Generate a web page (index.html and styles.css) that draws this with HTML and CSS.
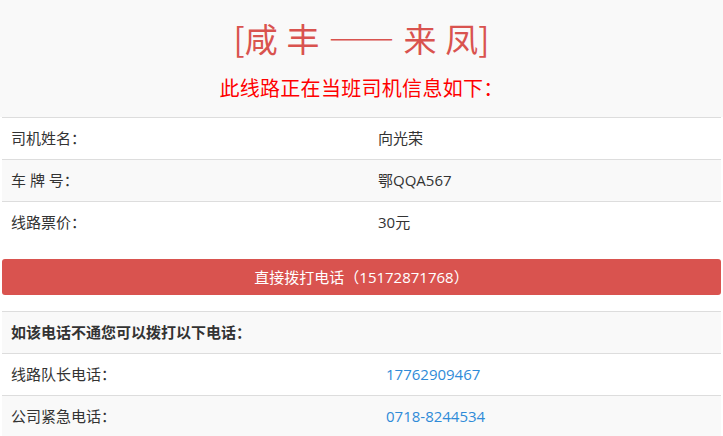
FILE: index.html
```html
<!DOCTYPE html>
<html lang="zh-CN">
<head>
  <meta charset="UTF-8">
  <meta name="viewport" content="width=device-width, initial-scale=1.0">
  <title>当班司机信息</title>
  <link rel="stylesheet" href="styles.css">
</head>
<body>
  <div class="header">
    <h1 class="route">[咸 丰 —— 来 凤]</h1>
    <h2 class="notice">此线路正在当班司机信息如下：</h2>
  </div>
  <div class="container">
    <table class="info">
      <tbody>
        <tr>
          <td class="label">司机姓名：</td>
          <td>向光荣</td>
        </tr>
        <tr class="odd">
          <td class="label">车 牌 号：</td>
          <td>鄂QQA567</td>
        </tr>
        <tr>
          <td class="label">线路票价：</td>
          <td>30元</td>
        </tr>
      </tbody>
    </table>

    <a class="call-btn" href="tel:15172871768">直接拨打电话（15172871768）</a>

    <table class="info backup">
      <tbody>
        <tr class="odd">
          <th colspan="2">如该电话不通您可以拨打以下电话：</th>
        </tr>
        <tr>
          <td class="label">线路队长电话：</td>
          <td><a href="tel:17762909467">17762909467</a></td>
        </tr>
        <tr class="odd">
          <td class="label">公司紧急电话：</td>
          <td><a href="tel:0718-8244534">0718-8244534</a></td>
        </tr>
      </tbody>
    </table>
  </div>
</body>
</html>
```

FILE: styles.css
```css
body {
  margin: 0;
  font-family: "Open Sans", "Noto Sans CJK SC", sans-serif;
  font-size: 15px;
  color: #333;
  background-color: #fff;
}
.header {
  background-color: #f9f9f9;
  text-align: center;
  padding: 18px 0 14px;
}
.route {
  margin: 0 0 17px;
  font-family: "Noto Sans CJK SC", sans-serif;
  font-size: 33px;
  line-height: 40px;
  font-weight: normal;
  word-spacing: 1.5px;
  color: #d9534f;
}
.notice {
  margin: 0;
  font-size: 20px;
  line-height: 28px;
  font-weight: normal;
  letter-spacing: 0.3px;
  color: #ff0000;
}
.container {
  padding: 0 2px;
}
table.info {
  width: 100%;
  border-collapse: collapse;
}
.info td, .info th {
  border-top: 1px solid #ddd;
  padding: 10px 9px;
  line-height: 21px;
  text-align: left;
}
.info th {
  font-weight: bold;
}
.info .odd {
  background-color: #f9f9f9;
}
.info .label {
  width: 349px;
}
.backup .label {
  width: 357px;
}
.info a {
  color: #2f8bd8;
  text-decoration: none;
}
.call-btn {
  display: block;
  margin: 16px 0;
  height: 36px;
  line-height: 36px;
  border-radius: 3px;
  background-color: #d9534f;
  color: #fff;
  text-align: center;
  text-decoration: none;
}
```
